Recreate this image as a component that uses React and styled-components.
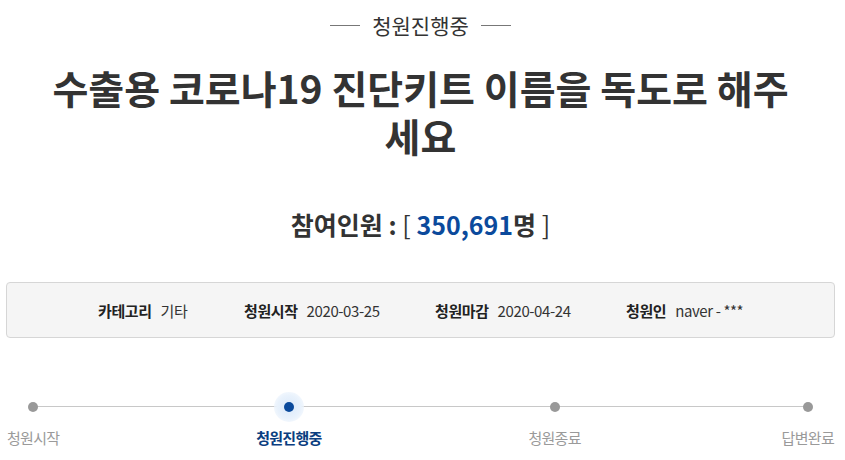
import React from "react";
import styled, { createGlobalStyle } from "styled-components";

const Global = createGlobalStyle`
  html, body { margin: 0; padding: 0; background: #fff; }
  body { font-family: "Noto Sans CJK KR", "Noto Sans", sans-serif; color: #333; }
  * { box-sizing: border-box; }
`;

const Page = styled.div`
  width: 845px;
  padding: 0 10px 0 6px;
  display: flex;
  flex-direction: column;
  align-items: stretch;
`;

const Status = styled.div`
  display: flex;
  align-items: center;
  justify-content: center;
  gap: 12px;
  height: 50px;
  font-size: 21px;
  color: #333;
  &::before, &::after {
    content: "";
    width: 30px;
    height: 1px;
    background: #777;
  }
`;

const Title = styled.h1`
  margin: 13px 0 0;
  font-size: 39px;
  font-weight: 700;
  line-height: 48px;
  text-align: center;
  color: #333;
`;

const Count = styled.div`
  margin-top: 48px;
  text-align: center;
  font-size: 25px;
  font-weight: 700;
  line-height: 34px;
  color: #333;
`;

const Num = styled.span`
  color: #0b4a9c;
`;

const Bracket = styled.span`
  font-weight: 400;
`;

const InfoBox = styled.div`
  margin-top: 41px;
  height: 56px;
  border: 1px solid #d6d6d6;
  border-radius: 4px;
  background: #f5f5f5;
  display: flex;
  align-items: center;
  padding-left: 91px;
  font-size: 15px;
  letter-spacing: -0.4px;
`;

const InfoItem = styled.div`
  display: flex;
  align-items: baseline;
  gap: 9px;
  width: ${(p) => p.$w}px;
`;

const Label = styled.b`
  font-weight: 700;
  color: #222;
`;

const Value = styled.span`
  color: #333;
`;

const Steps = styled.div`
  position: relative;
  margin-top: 54px;
  display: flex;
  justify-content: space-between;
  padding: 0 1px 0 1px;
`;

const Track = styled.div`
  position: absolute;
  left: 27px;
  right: 27px;
  top: 14px;
  height: 1px;
  background: #c8c8c8;
`;

const Step = styled.div`
  position: relative;
  display: flex;
  flex-direction: column;
  align-items: center;
  gap: 6px;
  margin-right: ${(p) => p.$shift || 0}px;
`;

const DotWrap = styled.div`
  width: 30px;
  height: 30px;
  border-radius: 50%;
  display: flex;
  align-items: center;
  justify-content: center;
  background: ${(p) =>
    p.$active
      ? "radial-gradient(circle, #dbe9fa 0%, #e9f2fc 55%, rgba(240,246,253,0.6) 80%, rgba(255,255,255,0) 100%)"
      : "transparent"};
`;

const Dot = styled.div`
  width: 10px;
  height: 10px;
  border-radius: 50%;
  background: ${(p) => (p.$active ? "#0b4a9c" : "#999")};
`;

const StepLabel = styled.div`
  font-size: 15px;
  letter-spacing: -0.7px;
  line-height: 20px;
  font-weight: ${(p) => (p.$active ? 700 : 400)};
  color: ${(p) => (p.$active ? "#0b3e80" : "#9a9a9a")};
`;

const steps = [
  { label: "청원시작" },
  { label: "청원진행중", active: true, shift: 10 },
  { label: "청원종료", shift: 4 },
  { label: "답변완료" },
];

export default function App() {
  return (
    <>
      <Global />
      <Page>
        <Status>청원진행중</Status>
        <Title>
          수출용 코로나19 진단키트 이름을 독도로 해주
          <br />
          세요
        </Title>
        <Count>
          참여인원 : <Bracket>[</Bracket> <Num>350,691</Num>명 <Bracket>]</Bracket>
        </Count>
        <InfoBox>
          <InfoItem $w={146}>
            <Label>카테고리</Label>
            <Value>기타</Value>
          </InfoItem>
          <InfoItem $w={191}>
            <Label>청원시작</Label>
            <Value>2020-03-25</Value>
          </InfoItem>
          <InfoItem $w={191}>
            <Label>청원마감</Label>
            <Value>2020-04-24</Value>
          </InfoItem>
          <InfoItem $w={200}>
            <Label>청원인</Label>
            <Value>naver - ***</Value>
          </InfoItem>
        </InfoBox>
        <Steps>
          <Track />
          {steps.map((s) => (
            <Step key={s.label} $shift={s.shift}>
              <DotWrap $active={s.active}>
                <Dot $active={s.active} />
              </DotWrap>
              <StepLabel $active={s.active}>{s.label}</StepLabel>
            </Step>
          ))}
        </Steps>
      </Page>
    </>
  );
}
